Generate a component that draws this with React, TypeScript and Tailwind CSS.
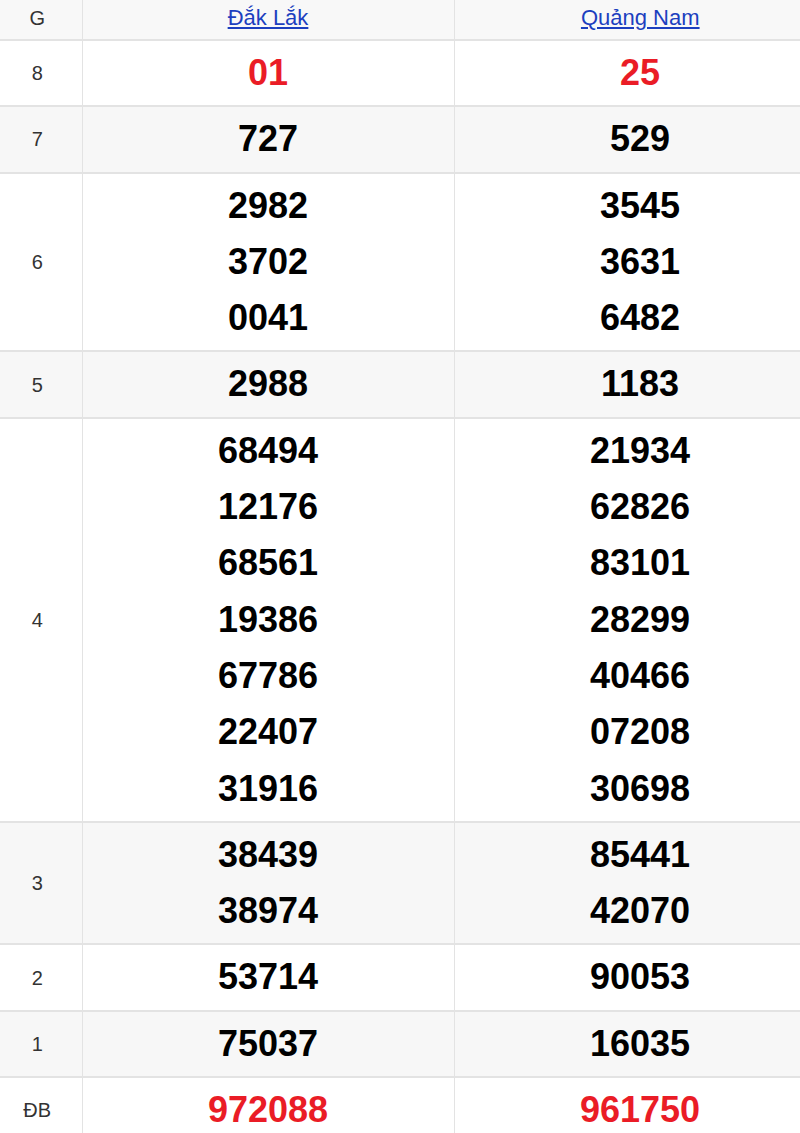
import React from 'react';

type Row = { label: string; a: string[]; b: string[]; red?: boolean };

const rows: Row[] = [
  { label: '8', a: ['01'], b: ['25'], red: true },
  { label: '7', a: ['727'], b: ['529'] },
  { label: '6', a: ['2982', '3702', '0041'], b: ['3545', '3631', '6482'] },
  { label: '5', a: ['2988'], b: ['1183'] },
  {
    label: '4',
    a: ['68494', '12176', '68561', '19386', '67786', '22407', '31916'],
    b: ['21934', '62826', '83101', '28299', '40466', '07208', '30698'],
  },
  { label: '3', a: ['38439', '38974'], b: ['85441', '42070'] },
  { label: '2', a: ['53714'], b: ['90053'] },
  { label: '1', a: ['75037'], b: ['16035'] },
  { label: 'ĐB', a: ['972088'], b: ['961750'], red: true },
];

function Numbers({ items, red }: { items: string[]; red?: boolean }) {
  return (
    <td className="border-x border-[#e3e3e3] py-[4px] text-center align-middle">
      {items.map((n) => (
        <div
          key={n}
          className={`text-[36px] font-bold leading-[56.3px] ${red ? 'text-[#ea1c26]' : 'text-black'}`}
        >
          {n}
        </div>
      ))}
    </td>
  );
}

export default function App() {
  return (
    <div className="w-[800px] overflow-hidden bg-white" style={{ fontFamily: '"Liberation Sans", Arial, sans-serif' }}>
      <table className="w-[826px] table-fixed border-collapse">
        <colgroup>
          <col className="w-[82px]" />
          <col className="w-[372px]" />
          <col className="w-[372px]" />
        </colgroup>
        <thead>
          <tr className="h-[40px] border-b-2 border-[#e3e3e3] bg-[#f8f8f8]">
            <th className="border-r border-[#e3e3e3] pb-[4px] pr-[7px] text-[20px] font-normal text-[#333]">G</th>
            <th className="border-r border-[#e3e3e3] pb-[4px] text-[22px] font-normal">
              <a href="#" className="text-[#1c3fbf] underline">Đắk Lắk</a>
            </th>
            <th className="pb-[4px] text-[22px] font-normal">
              <a href="#" className="text-[#1c3fbf] underline">Quảng Nam</a>
            </th>
          </tr>
        </thead>
        <tbody>
          {rows.map((r, i) => (
            <tr
              key={r.label}
              className={`border-b-2 border-[#e3e3e3] ${i % 2 === 1 ? 'bg-[#f7f7f7]' : 'bg-white'}`}
            >
              <td className="border-r border-[#e3e3e3] pr-[7px] text-center align-middle text-[20px] text-[#333]">
                {r.label}
              </td>
              <Numbers items={r.a} red={r.red} />
              <Numbers items={r.b} red={r.red} />
            </tr>
          ))}
        </tbody>
      </table>
    </div>
  );
}
